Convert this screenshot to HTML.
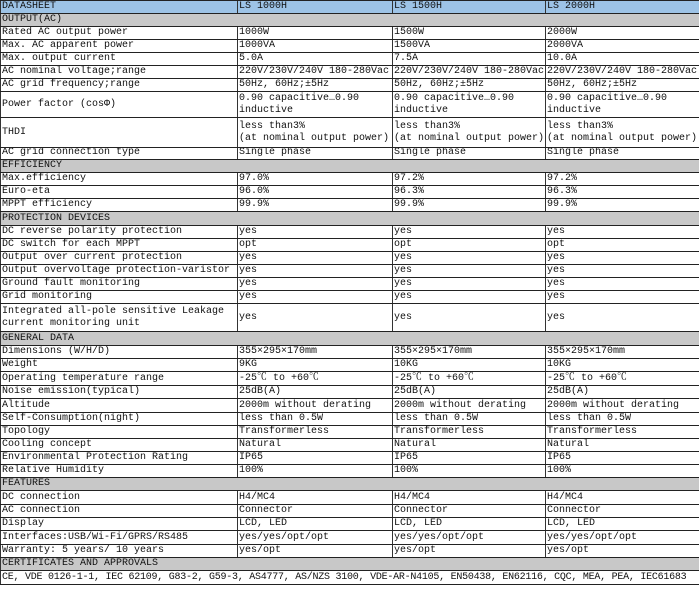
<!DOCTYPE html><html><head><meta charset="utf-8"><style>
body{margin:0;width:700px;height:600px;background:#fff;position:relative;overflow:hidden;font-family:"Liberation Mono","Noto Serif CJK SC",monospace;font-size:10px;color:#111}
.r{position:absolute;left:0;width:699px;border-bottom:1px solid #222;box-sizing:border-box}
.r div{position:absolute;top:0;bottom:0;border-left:1px solid #333;padding-left:1px;display:flex;align-items:flex-end;line-height:12px;white-space:nowrap;overflow:hidden}
.r .a{left:0;width:236px}.r .b{left:237px;width:154px}.r .c{left:392px;width:152px}.r .d{left:545px;width:154px;border-right:1px solid #333}
.r .m{align-items:center}
.s{background:#c8c8c8}.s div{width:698px;left:0;border-right:1px solid #333}
.h{background:#9dc3e6;border-top:1px solid #222}
.t{white-space:normal!important;flex-direction:column;justify-content:center;align-items:flex-start!important}
</style></head><body>
<div class="r h" style="top:0;height:14px"><div class="a">DATASHEET</div><div class="b">LS 1000H</div><div class="c">LS 1500H</div><div class="d">LS 2000H</div></div>
<div class="r s" style="top:14px;height:13px"><div>OUTPUT(AC)</div></div>
<div class="r" style="top:27px;height:13px"><div class="a">Rated AC output power</div><div class="b">1000W</div><div class="c">1500W</div><div class="d">2000W</div></div>
<div class="r" style="top:40px;height:13px"><div class="a">Max. AC apparent power</div><div class="b">1000VA</div><div class="c">1500VA</div><div class="d">2000VA</div></div>
<div class="r" style="top:53px;height:13px"><div class="a">Max. output current</div><div class="b">5.0A</div><div class="c">7.5A</div><div class="d">10.0A</div></div>
<div class="r" style="top:66px;height:13px"><div class="a">AC nominal voltage;range</div><div class="b">220V/230V/240V 180-280Vac</div><div class="c">220V/230V/240V 180-280Vac</div><div class="d">220V/230V/240V 180-280Vac</div></div>
<div class="r" style="top:79px;height:13px"><div class="a">AC grid frequency;range</div><div class="b">50Hz, 60Hz;±5Hz</div><div class="c">50Hz, 60Hz;±5Hz</div><div class="d">50Hz, 60Hz;±5Hz</div></div>
<div class="r" style="top:92px;height:26px"><div class="a m">Power factor (cosΦ)</div><div class="b t"><span>0.90 capacitive…0.90</span><span>inductive</span></div><div class="c t"><span>0.90 capacitive…0.90</span><span>inductive</span></div><div class="d t"><span>0.90 capacitive…0.90</span><span>inductive</span></div></div>
<div class="r" style="top:118px;height:30px"><div class="a m">THDI</div><div class="b t"><span>less than3%</span><span>(at nominal output power)</span></div><div class="c t"><span>less than3%</span><span>(at nominal output power)</span></div><div class="d t"><span>less than3%</span><span>(at nominal output power)</span></div></div>
<div class="r" style="top:148px;height:12px"><div class="a">AC grid connection type</div><div class="b">Single phase</div><div class="c">Single phase</div><div class="d">Single phase</div></div>
<div class="r s" style="top:160px;height:13px"><div>EFFICIENCY</div></div>
<div class="r" style="top:173px;height:13px"><div class="a">Max.efficiency</div><div class="b">97.0%</div><div class="c">97.2%</div><div class="d">97.2%</div></div>
<div class="r" style="top:186px;height:13px"><div class="a">Euro-eta</div><div class="b">96.0%</div><div class="c">96.3%</div><div class="d">96.3%</div></div>
<div class="r" style="top:199px;height:13px"><div class="a">MPPT efficiency</div><div class="b">99.9%</div><div class="c">99.9%</div><div class="d">99.9%</div></div>
<div class="r s" style="top:212px;height:14px"><div>PROTECTION DEVICES</div></div>
<div class="r" style="top:226px;height:13px"><div class="a">DC reverse polarity protection</div><div class="b">yes</div><div class="c">yes</div><div class="d">yes</div></div>
<div class="r" style="top:239px;height:13px"><div class="a">DC switch for each MPPT</div><div class="b">opt</div><div class="c">opt</div><div class="d">opt</div></div>
<div class="r" style="top:252px;height:13px"><div class="a">Output over current protection</div><div class="b">yes</div><div class="c">yes</div><div class="d">yes</div></div>
<div class="r" style="top:265px;height:13px"><div class="a">Output overvoltage protection-varistor</div><div class="b">yes</div><div class="c">yes</div><div class="d">yes</div></div>
<div class="r" style="top:278px;height:13px"><div class="a">Ground fault monitoring</div><div class="b">yes</div><div class="c">yes</div><div class="d">yes</div></div>
<div class="r" style="top:291px;height:13px"><div class="a">Grid monitoring</div><div class="b">yes</div><div class="c">yes</div><div class="d">yes</div></div>
<div class="r" style="top:304px;height:28px"><div class="a t"><span>Integrated all-pole sensitive Leakage</span><span>current monitoring unit</span></div><div class="b m">yes</div><div class="c m">yes</div><div class="d m">yes</div></div>
<div class="r s" style="top:332px;height:14px"><div>GENERAL DATA</div></div>
<div class="r" style="top:346px;height:13px"><div class="a">Dimensions (W/H/D)</div><div class="b">355×295×170mm</div><div class="c">355×295×170mm</div><div class="d">355×295×170mm</div></div>
<div class="r" style="top:359px;height:13px"><div class="a">Weight</div><div class="b">9KG</div><div class="c">10KG</div><div class="d">10KG</div></div>
<div class="r" style="top:372px;height:14px"><div class="a">Operating temperature range</div><div class="b">-25℃ to +60℃</div><div class="c">-25℃ to +60℃</div><div class="d">-25℃ to +60℃</div></div>
<div class="r" style="top:386px;height:13px"><div class="a">Noise emission(typical)</div><div class="b">25dB(A)</div><div class="c">25dB(A)</div><div class="d">25dB(A)</div></div>
<div class="r" style="top:399px;height:14px"><div class="a">Altitude</div><div class="b">2000m without derating</div><div class="c">2000m without derating</div><div class="d">2000m without derating</div></div>
<div class="r" style="top:413px;height:13px"><div class="a">Self-Consumption(night)</div><div class="b">less than 0.5W</div><div class="c">less than 0.5W</div><div class="d">less than 0.5W</div></div>
<div class="r" style="top:426px;height:13px"><div class="a">Topology</div><div class="b">Transformerless</div><div class="c">Transformerless</div><div class="d">Transformerless</div></div>
<div class="r" style="top:439px;height:13px"><div class="a">Cooling concept</div><div class="b">Natural</div><div class="c">Natural</div><div class="d">Natural</div></div>
<div class="r" style="top:452px;height:13px"><div class="a">Environmental Protection Rating</div><div class="b">IP65</div><div class="c">IP65</div><div class="d">IP65</div></div>
<div class="r" style="top:465px;height:13px"><div class="a">Relative Humidity</div><div class="b">100%</div><div class="c">100%</div><div class="d">100%</div></div>
<div class="r s" style="top:478px;height:13px"><div>FEATURES</div></div>
<div class="r" style="top:491px;height:14px"><div class="a">DC connection</div><div class="b">H4/MC4</div><div class="c">H4/MC4</div><div class="d">H4/MC4</div></div>
<div class="r" style="top:505px;height:13px"><div class="a">AC connection</div><div class="b">Connector</div><div class="c">Connector</div><div class="d">Connector</div></div>
<div class="r" style="top:518px;height:13px"><div class="a">Display</div><div class="b">LCD, LED</div><div class="c">LCD, LED</div><div class="d">LCD, LED</div></div>
<div class="r" style="top:531px;height:14px"><div class="a">Interfaces:USB/Wi-Fi/GPRS/RS485</div><div class="b">yes/yes/opt/opt</div><div class="c">yes/yes/opt/opt</div><div class="d">yes/yes/opt/opt</div></div>
<div class="r" style="top:545px;height:13px"><div class="a">Warranty: 5 years/ 10 years</div><div class="b">yes/opt</div><div class="c">yes/opt</div><div class="d">yes/opt</div></div>
<div class="r s" style="top:558px;height:13px"><div>CERTIFICATES AND APPROVALS</div></div>
<div class="r" style="top:571px;height:14px"><div style="left:0;width:698px;border-right:1px solid #333;letter-spacing:-0.25px">CE, VDE 0126-1-1, IEC 62109, G83-2, G59-3, AS4777, AS/NZS 3100, VDE-AR-N4105, EN50438, EN62116, CQC, MEA, PEA, IEC61683</div></div>
</body></html>
